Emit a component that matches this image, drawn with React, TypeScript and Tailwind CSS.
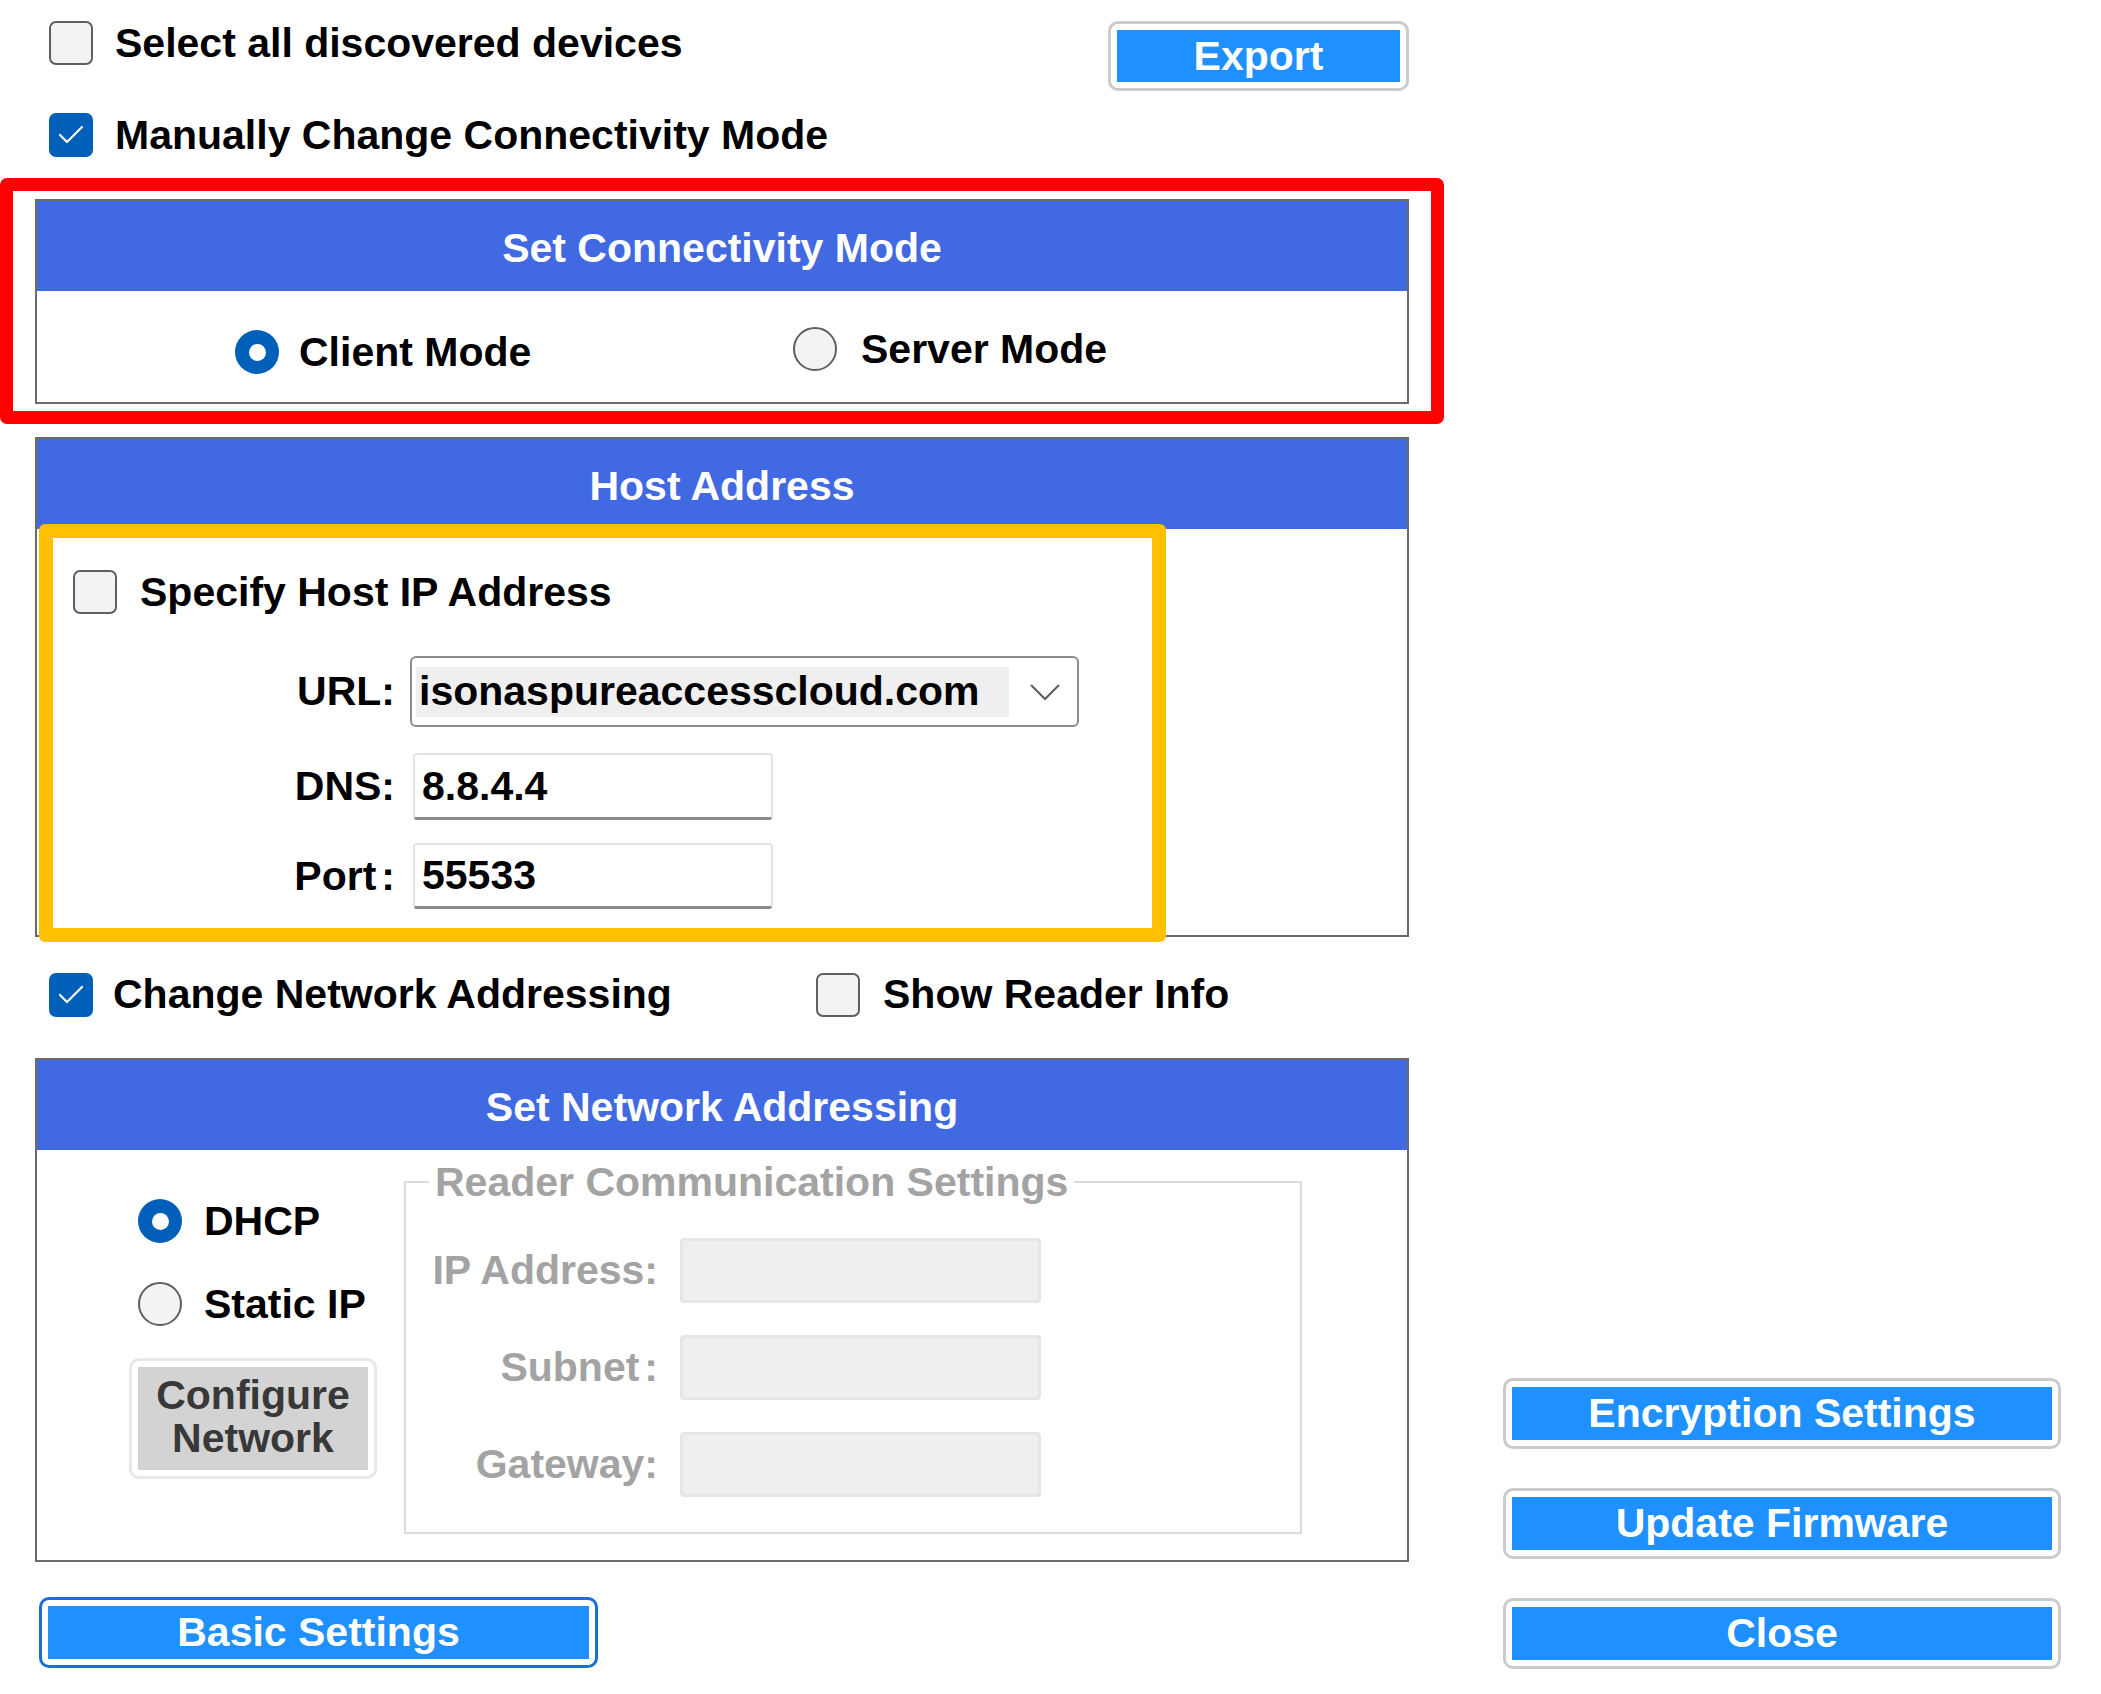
import React from 'react'

// Win11-style checkbox
function Checkbox({ checked }: { checked?: boolean }) {
  if (checked) {
    return (
      <div className="w-[44px] h-[44px] shrink-0 rounded-[7px] bg-[#005fb8] flex items-center justify-center">
        <svg width="44" height="44" viewBox="0 0 44 44">
          <polyline points="11,22 18,29 33,14" fill="none" stroke="#ffffff" strokeWidth="2.2" strokeLinecap="round" strokeLinejoin="round" />
        </svg>
      </div>
    )
  }
  return <div className="w-[44px] h-[44px] shrink-0 rounded-[7px] border-2 border-[#5f5f5f] bg-[#f3f3f3]" />
}

function Radio({ checked }: { checked?: boolean }) {
  if (checked) {
    return (
      <div className="w-[44px] h-[44px] shrink-0 rounded-full bg-[#005fb8] flex items-center justify-center">
        <div className="w-[17px] h-[17px] rounded-full bg-white" />
      </div>
    )
  }
  return <div className="w-[44px] h-[44px] shrink-0 rounded-full border-2 border-[#5f5f5f] bg-[#f3f3f3]" />
}

function BlueButton({ label, focused, className }: { label: string; focused?: boolean; className: string }) {
  return (
    <button
      className={
        'shrink-0 rounded-[10px] border-[3px] p-[6px] bg-white ' +
        (focused ? 'border-[#1a6fd6] ' : 'border-[#cbcbcb] ') +
        className
      }
    >
      <div className="w-full h-full bg-[#1e90ff] flex items-center justify-center text-white leading-none">
        {label}
      </div>
    </button>
  )
}

function Panel({ title, bodyClass, children }: { title: string; bodyClass: string; children: React.ReactNode }) {
  return (
    <div className="relative w-[1374px] border-2 border-[#6b6b6b] bg-white">
      <div className="h-[90px] bg-[#4169e1] flex items-center justify-center pt-[4px] text-white leading-none">
        {title}
      </div>
      <div className={bodyClass}>{children}</div>
    </div>
  )
}

function TextBox({ value, className }: { value: string; className: string }) {
  return (
    <div
      className={
        'shrink-0 rounded-[4px] border-2 border-[#e4e4e4] border-b-[3px] border-b-[#8a8a8a] bg-white flex items-center pl-[7px] leading-none ' +
        className
      }
    >
      {value}
    </div>
  )
}

function DisabledBox() {
  return (
    <div className="w-[361px] h-[65px] ml-[22px] shrink-0 rounded-[4px] border-[3px] border-[#e6e6e6] bg-[#efefef]" />
  )
}

export default function App() {
  return (
    <div className="w-[2101px] h-[1694px] bg-white flex font-['Liberation_Sans',Arial,Helvetica,sans-serif] font-bold text-[41px] text-black overflow-hidden">
      {/* left column */}
      <div className="w-[1444px] shrink-0 flex flex-col">
        <div className="flex justify-between items-start pt-[21px] pl-[49px] pr-[35px]">
          <label className="flex items-center gap-[22px] h-[44px] leading-none">
            <Checkbox />
            <span>Select all discovered devices</span>
          </label>
          <BlueButton label="Export" className="w-[301px] h-[70px]" />
        </div>

        <label className="mt-[22px] ml-[49px] flex items-center gap-[22px] h-[44px] leading-none">
          <Checkbox checked />
          <span>Manually Change Connectivity Mode</span>
        </label>

        {/* highlighted: connectivity mode */}
        <div className="mt-[21px] border-[13px] border-[#ff0000] rounded-[7px] pt-[8px] pb-[7px] px-[22px]">
          <Panel title="Set Connectivity Mode" bodyClass="h-[111px] flex items-start pt-[39px] pl-[198px] leading-none">
            <div className="w-[558px] flex items-center gap-[20px] h-[44px]">
              <Radio checked />
              <span>Client Mode</span>
            </div>
            <div className="flex items-center gap-[24px] h-[44px] -mt-[3px]">
              <Radio />
              <span>Server Mode</span>
            </div>
          </Panel>
        </div>

        {/* host address */}
        <div className="mt-[13px] ml-[35px]">
          <Panel title="Host Address" bodyClass="h-[406px] pl-[36px] pt-[41px] leading-none">
            <label className="flex items-center gap-[23px] h-[44px]">
              <Checkbox />
              <span>Specify Host IP Address</span>
            </label>
            <div className="mt-[42px] flex items-center">
              <span className="w-[322px] text-right">URL:</span>
              <div className="ml-[15px] w-[669px] h-[71px] rounded-[6px] border-2 border-[#8c8c8c] bg-white flex items-center pl-[4px]">
                <div className="w-[593px] h-[50px] bg-[#efefef] flex items-center pl-[3px]">isonaspureaccesscloud.com</div>
                <svg className="ml-[20px]" width="32" height="18" viewBox="0 0 32 18">
                  <polyline points="2,2 16,16 30,2" fill="none" stroke="#5a5a5a" strokeWidth="2" />
                </svg>
              </div>
            </div>
            <div className="mt-[26px] flex items-center">
              <span className="w-[322px] text-right">DNS:</span>
              <TextBox value="8.8.4.4" className="ml-[18px] w-[360px] h-[67px]" />
            </div>
            <div className="mt-[23px] flex items-center">
              <span className="w-[322px] text-right">
                Port<span className="ml-[5px]">:</span>
              </span>
              <TextBox value="55533" className="ml-[18px] w-[360px] h-[66px]" />
            </div>
            {/* yellow annotation frame */}
            <div className="absolute left-[2px] top-[85px] w-[1127px] h-[418px] border-[14px] border-[#ffc000] rounded-[6px] pointer-events-none" />
          </Panel>
        </div>

        <div className="mt-[35px] pl-[49px] flex items-center h-[45px] leading-none">
          <label className="w-[767px] flex items-center gap-[20px]">
            <Checkbox checked />
            <span>Change Network Addressing</span>
          </label>
          <label className="flex items-center gap-[23px]">
            <Checkbox />
            <span>Show Reader Info</span>
          </label>
        </div>

        {/* network addressing */}
        <div className="mt-[41px] ml-[35px]">
          <Panel title="Set Network Addressing" bodyClass="h-[410px] flex items-start pl-[92px] leading-none">
            <div className="w-[248px] shrink-0 pt-[49px] flex flex-col">
              <div className="pl-[9px] flex items-center gap-[22px] h-[44px]">
                <Radio checked />
                <span>DHCP</span>
              </div>
              <div className="mt-[39px] pl-[9px] flex items-center gap-[22px] h-[44px]">
                <Radio />
                <span>Static IP</span>
              </div>
              <div className="mt-[32px] w-[248px] h-[121px] rounded-[10px] border-[3px] border-[#e8e8e8] p-[6px]">
                <div className="w-full h-full bg-[#d3d3d3] flex flex-col items-center justify-center pb-[4px] text-[#383838] leading-[43px]">
                  <span>Configure</span>
                  <span>Network</span>
                </div>
              </div>
            </div>
            <fieldset className="ml-[27px] mt-[8px] w-[898px] border-2 border-[#dcdcdc] pb-[35px]">
              <legend className="ml-[23px] px-[6px] leading-[48px] text-[#a3a3a3]">Reader Communication Settings</legend>
              <div className="mt-[32px] flex items-center text-[#a3a3a3]">
                <span className="w-[252px] text-right">IP Address:</span>
                <DisabledBox />
              </div>
              <div className="mt-[32px] flex items-center text-[#a3a3a3]">
                <span className="w-[252px] text-right">
                  Subnet<span className="ml-[5px]">:</span>
                </span>
                <DisabledBox />
              </div>
              <div className="mt-[32px] flex items-center text-[#a3a3a3]">
                <span className="w-[252px] text-right">Gateway:</span>
                <DisabledBox />
              </div>
            </fieldset>
          </Panel>
        </div>

        <BlueButton label="Basic Settings" focused className="mt-[35px] ml-[39px] w-[559px] h-[71px]" />
      </div>

      {/* right column */}
      <div className="flex-1 flex flex-col justify-end gap-[39px] pl-[59px] pb-[25px]">
        <BlueButton label="Encryption Settings" className="w-[558px] h-[71px]" />
        <BlueButton label="Update Firmware" className="w-[558px] h-[71px]" />
        <BlueButton label="Close" className="w-[558px] h-[71px]" />
      </div>
    </div>
  )
}
